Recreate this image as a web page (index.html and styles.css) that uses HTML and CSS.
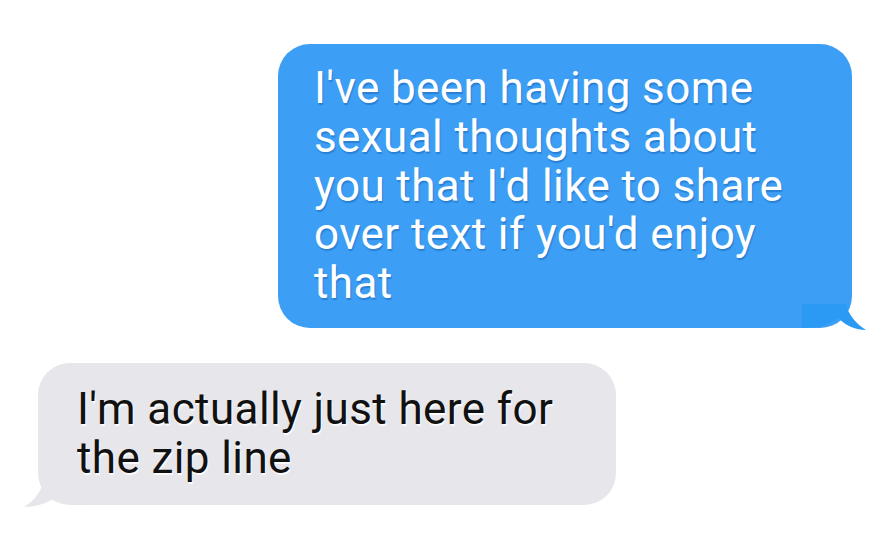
FILE: index.html
```html
<!DOCTYPE html>
<html>
<head>
<meta charset="utf-8">
<link rel="stylesheet" href="styles.css">
</head>
<body>
<main class="thread">
  <div class="row row-out">
    <div class="bubble bubble-out">
      <p class="msg">I've been having some sexual thoughts about you that I'd like to share over text if you'd enjoy that</p>
      <svg class="tail tail-out" viewBox="0 0 64 26" width="64" height="26">
        <path d="M0 0 H44 C46 10 54 20 64 26 C54 26 44 22 36 14 C28 20 18 24 0 24 Z" fill="#2b9af4"/>
      </svg>
    </div>
  </div>
  <div class="row row-in">
    <div class="bubble bubble-in">
      <p class="msg">I'm actually just here for the zip line</p>
      <svg class="tail tail-in" viewBox="0 0 64 28" width="64" height="28">
        <path d="M64 0 H20 C18 12 10 22 0 28 C12 28 24 24 32 18 C40 24 50 26 64 26 Z" fill="#e6e6eb"/>
      </svg>
    </div>
  </div>
</main>
</body>
</html>
```
FILE: styles.css
```css
html, body {
  margin: 0;
  padding: 0;
  background: #ffffff;
}

.thread {
  width: 889px;
  height: 554px;
  display: flex;
  flex-direction: column;
  font-family: Roboto, "Liberation Sans", sans-serif;
}

.row {
  display: flex;
}

.row-out {
  padding: 44px 37px 0 278px;
}

.row-in {
  padding: 35px 0 0 38px;
}

.bubble {
  position: relative;
  border-radius: 32px;
  box-sizing: border-box;
}

.bubble-out {
  width: 574px;
  height: 284px;
  background: #3c9ff5;
  padding: 20px 18px 0 36px;
}

.bubble-in {
  width: 578px;
  height: 142px;
  background: #e6e6eb;
  padding: 22px 18px 0 39px;
}

.msg {
  margin: 0;
  font-size: 44px;
  line-height: 48.8px;
  letter-spacing: 0.4px;
}

.bubble-out .msg {
  color: #ffffff;
  text-shadow: 1px 2px 1px rgba(20, 90, 170, 0.45);
}

.bubble-in .msg {
  color: #111111;
  text-shadow: 1px 2px 1px rgba(255, 255, 255, 0.9);
}

/* tails sit under the bubble's bottom corners */
.tail {
  position: absolute;
  display: block;
}

.tail-out {
  right: -14px;
  bottom: -2px;
}

.tail-in {
  left: -14px;
  bottom: -2px;
}
```
